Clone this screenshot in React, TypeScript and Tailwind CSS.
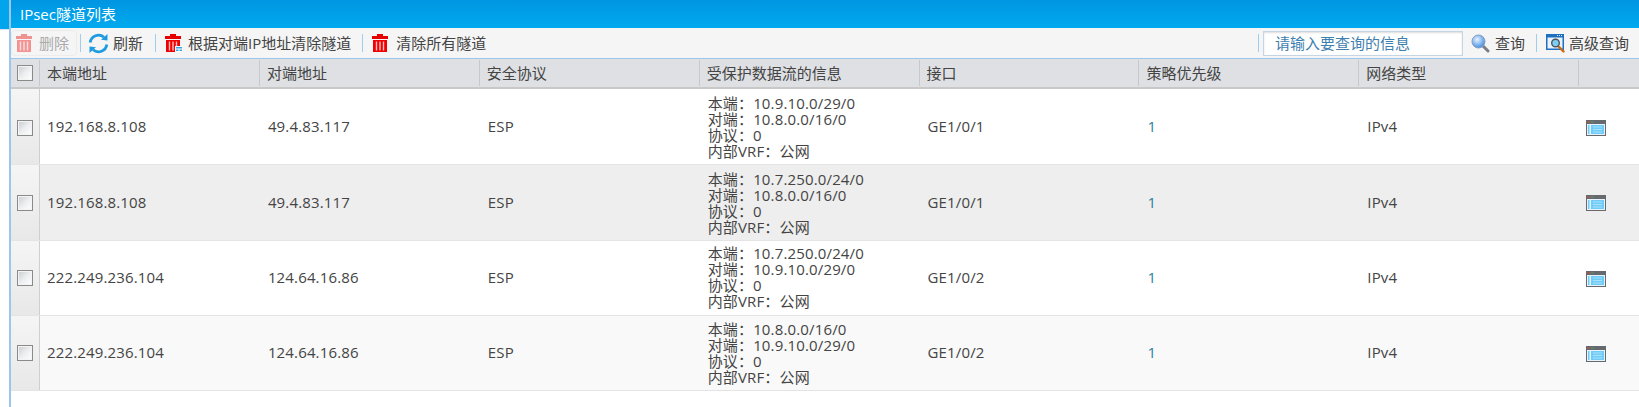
const font = { fontFamily: '"Open Sans", "Noto Sans CJK SC", sans-serif' };

const columns = ['本端地址', '对端地址', '安全协议', '受保护数据流的信息', '接口', '策略优先级', '网络类型', ''];

// rows are not all the same height in the original, so offsets are per row
const rows = [
  { local: '192.168.8.108', peer: '49.4.83.117', src: '10.9.10.0/29/0', dst: '10.8.0.0/16/0', port: 'GE1/0/1', cls: 'h-[76px] bg-white', box: 'pt-[3px]', text: '', info: '', icon: 'pt-[3px]' },
  { local: '192.168.8.108', peer: '49.4.83.117', src: '10.7.250.0/24/0', dst: '10.8.0.0/16/0', port: 'GE1/0/1', cls: 'h-[76px] bg-[#eeeeee]', box: 'pt-[1px]', text: '', info: '', icon: 'pt-[1px]' },
  { local: '222.249.236.104', peer: '124.64.16.86', src: '10.7.250.0/24/0', dst: '10.9.10.0/29/0', port: 'GE1/0/2', cls: 'h-[75px] bg-white', box: '', text: 'pb-[2px]', info: 'pb-[2px]', icon: 'pt-[2px]' },
  { local: '222.249.236.104', peer: '124.64.16.86', src: '10.8.0.0/16/0', dst: '10.9.10.0/29/0', port: 'GE1/0/2', cls: 'h-[75px] bg-[#f9f9f9]', box: '', text: 'pb-[2px]', info: '', icon: 'pt-[2px]' },
];

function Trash({ faded = false, badge = false }: { faded?: boolean; badge?: boolean }) {
  return (
    <svg width="18" height="20" viewBox="0 0 18 20" className={faded ? 'opacity-40 shrink-0' : 'shrink-0'}>
      <path d="M6 1h6v2h5v3H1V3h5z" fill="#e60000" />
      <path d="M2 7h14v12H2z" fill="#f00000" />
      <path d="M5.5 8.5v9M9 8.5v9M12.5 8.5v9" stroke="#fff" strokeWidth="1.4" opacity="0.75" />
      {badge && (
        <g>
          <path d="M11 13h7v6h-7z" fill="#fff" />
          <path d="M12 14h6v1.5h-6zM12 16.5h2.5V18H12zM15.5 16.5H18V18h-2.5z" fill="#35a5e5" />
        </g>
      )}
    </svg>
  );
}

function Refresh() {
  return (
    <svg width="21" height="21" viewBox="0 0 21 21" fill="none" className="shrink-0">
      <path d="M2.2 9.5A8.4 8.4 0 0 1 16 4.2" stroke="#1c9be0" strokeWidth="2.8" />
      <path d="M18.8 11.5A8.4 8.4 0 0 1 5 16.8" stroke="#1c9be0" strokeWidth="2.8" />
      <path d="M13 6.8L19.5 7.5V1z" fill="#1c9be0" />
      <path d="M8 14.2L1.5 13.5V20z" fill="#1c9be0" />
    </svg>
  );
}

function Search() {
  return (
    <svg width="19" height="19" viewBox="0 0 19 19" className="shrink-0">
      <defs>
        <radialGradient id="lens" cx="0.4" cy="0.35" r="0.7">
          <stop offset="0" stopColor="#e6f4ff" />
          <stop offset="1" stopColor="#3d86e0" />
        </radialGradient>
      </defs>
      <path d="M11 11l6 6" stroke="#7a7f86" strokeWidth="3" strokeLinecap="round" />
      <circle cx="7.5" cy="7.5" r="6.5" fill="url(#lens)" stroke="#7f9fc4" />
    </svg>
  );
}

function AdvancedSearch() {
  return (
    <svg width="19" height="19" viewBox="0 0 19 19" className="shrink-0">
      <path d="M0 0h18v16H0z" fill="#1f6fc0" />
      <path d="M1.5 3.5h15v11h-15z" fill="#e8f2fa" />
      <path d="M11 1h1v1h-1zM13 1h1v1h-1zM15 1h1v1h-1z" fill="#cfe6f7" />
      <path d="M12 12l5.5 5.5" stroke="#c96a12" strokeWidth="2.4" strokeLinecap="round" />
      <circle cx="9.5" cy="9" r="3.8" fill="#7fcdf0" stroke="#4a5560" strokeWidth="1.4" />
    </svg>
  );
}

function WindowIcon() {
  return (
    <svg width="20" height="16" viewBox="0 0 20 16" className="block">
      <path d="M0 0h20v16H0z" fill="#666a6e" />
      <path d="M1 4h18v11H1z" fill="#e6f3fb" />
      <path d="M5 5h13v9H5z" fill="#6fcbf7" />
      <path d="M2 5h1.5v9H2z" fill="#6fcbf7" />
      <path d="M7 7h9M7 9.5h9M7 12h9" stroke="#a9e2fb" strokeWidth="1" />
      <path d="M1 1.5h4v1H1z" fill="#c0504d" />
      <path d="M5 1.5h3v1H5z" fill="#4a9a6a" />
    </svg>
  );
}

function Checkbox() {
  return (
    <span className="block w-4 h-4 border border-[#8a8a8a] bg-gradient-to-br from-[#c8ccd0] via-[#eceef0] to-white shadow-[inset_0_0_0_1px_#f4f4f4]" />
  );
}

function Divider() {
  return <span className="block w-px h-[18px] bg-[#9fcdec] shrink-0" />;
}

export default function App() {
  return (
    <div className="w-[1639px] h-[407px] bg-white overflow-hidden text-[15px] text-[#444444] flex" style={font}>
      <div className="w-[9px] shrink-0">
        <div className="h-[30px] bg-[#00a5ec] border-b border-[#d5e6f2]" />
      </div>
      <div className="flex-1 border-l-2 border-[#9cc6ee] flex flex-col">
        <div className="h-[28px] shrink-0 bg-gradient-to-b from-[#0095e2] to-[#00aaee] text-white pl-[9px] flex items-center leading-[28px]">
          IPsec隧道列表
        </div>
        <div className="h-[31px] shrink-0 bg-[#f5f5f5] border-b border-[#99c6ec] flex items-center pr-[10px]">
          <div className="h-[26px] w-[66px] rounded border border-[#ececec] flex items-center gap-[6px] pl-[3px] text-[#aaaaaa]">
            <Trash faded />
            <span>删除</span>
          </div>
          <div className="ml-[3px]"><Divider /></div>
          <div className="ml-[7px] flex items-center gap-[4px]">
            <Refresh />
            <span>刷新</span>
          </div>
          <div className="ml-[12px]"><Divider /></div>
          <div className="ml-[8px] flex items-center gap-[6px]">
            <Trash badge />
            <span>根据对端IP地址清除隧道</span>
          </div>
          <div className="ml-[11px]"><Divider /></div>
          <div className="ml-[8px] flex items-center gap-[7px]">
            <Trash />
            <span>清除所有隧道</span>
          </div>
          <div className="ml-auto flex items-center">
            <Divider />
            <div className="ml-[4px] w-[200px] h-[25px] border border-[#c4d6e6] bg-white pl-[11px] flex items-center text-[#3f7fb0] shadow-[inset_0_1px_2px_#ddd]">
              请输入要查询的信息
            </div>
            <div className="ml-[8px] flex items-center gap-[5px]">
              <Search />
              <span>查询</span>
            </div>
            <div className="ml-[11px]"><Divider /></div>
            <div className="ml-[9px] flex items-center gap-[4px]">
              <AdvancedSearch />
              <span>高级查询</span>
            </div>
          </div>
        </div>
        <div className="h-[30px] shrink-0 bg-[#dee0e3] border-b-2 border-[#c8c8c8] grid grid-cols-[28px_repeat(7,219.9px)_1fr] items-center">
          <div className="h-full pl-[6px] flex items-center"><Checkbox /></div>
          {columns.map((c, i) => (
            <div key={i} className="h-[26px] border-l border-[#c6c8ca] pl-[7px] flex items-center">{c}</div>
          ))}
        </div>
        {rows.map((r, i) => (
          <div key={i} className={`shrink-0 border-b border-[#e4e4e4] grid grid-cols-[29px_repeat(7,219.9px)_1fr] items-center tracking-[0.15px] ${r.cls}`}>
            <div className={`h-full bg-gradient-to-b from-[#f5f5f5] to-[#e8e8e8] border-r border-[#cfcfcf] pl-[6px] flex items-center ${r.box}`}><Checkbox /></div>
            <div className={`pl-[7px] ${r.text}`}>{r.local}</div>
            <div className={`pl-[8px] ${r.text}`}>{r.peer}</div>
            <div className={`pl-[8px] ${r.text}`}>ESP</div>
            <div className={`pl-[8px] leading-[16px] ${r.info}`}>
              <div>本端：{r.src}</div>
              <div>对端：{r.dst}</div>
              <div>协议：0</div>
              <div>内部VRF：公网</div>
            </div>
            <div className={`pl-[8px] ${r.text}`}>{r.port}</div>
            <div className={`pl-[8px] text-[#2a7fa5] ${r.text}`}>1</div>
            <div className={`pl-[8px] ${r.text}`}>IPv4</div>
            <div className={`pl-[7px] ${r.icon}`}><WindowIcon /></div>
          </div>
        ))}
      </div>
    </div>
  );
}
